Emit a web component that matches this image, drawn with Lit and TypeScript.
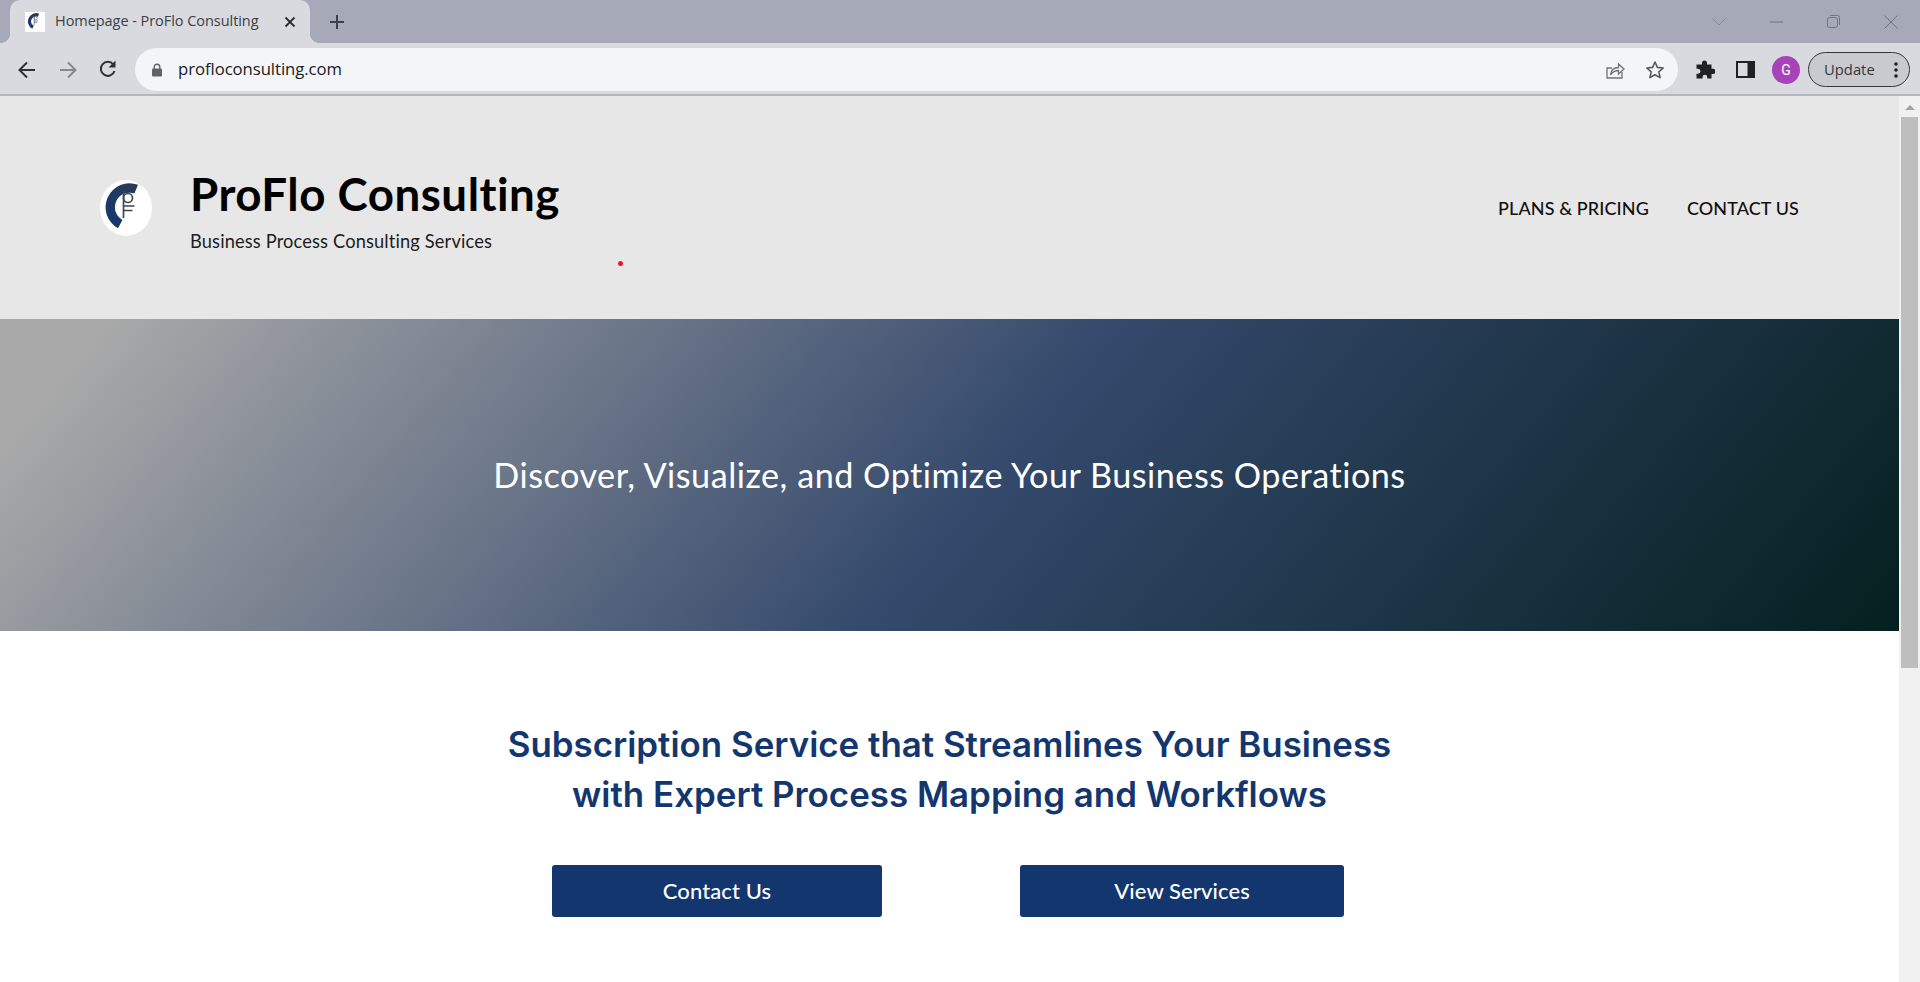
import { LitElement, html, css } from "lit";
import { customElement } from "lit/decorators.js";

const logo = (s: number) => html`<svg width="${s}" height="${s * 56 / 52}" viewBox="0 0 52 56" class="logomark">
  <defs><linearGradient id="lg" x1="0" y1="1" x2="1" y2="0"><stop offset="0" stop-color="#14366f"/><stop offset="1" stop-color="#2c3c58"/></linearGradient></defs>
  <path d="M38 4.800A24 24 0 0 0 18 48.300L22.400 39.900A14.500 14.500 0 0 1 34.400 13.600Z" fill="url(#lg)"/>
  <g fill="none" stroke="#3d4654" stroke-width="1.700"><circle cx="28" cy="18" r="4.500"/><path d="M23.500 11v27"/><path d="M23.500 26h11M23.500 30.500h9"/></g>
</svg>`;

@customElement("app-root")
export class AppRoot extends LitElement {
  static styles = css`
    :host { display: flex; flex-direction: column; width: 1920px; height: 982px; overflow: hidden; font-family: "Lato", "Open Sans", sans-serif; background: #fff; }
    svg { display: block; flex: none; }

    .tabstrip { height: 43px; flex: none; background: #a6a9b7; display: flex; align-items: stretch; padding-left: 10px; }
    .tab { position: relative; width: 300px; background: #d9dae0; border-radius: 10px 10px 0 0; display: flex; align-items: center; padding-left: 15px; box-sizing: border-box; }
    .tab::before, .tab::after { content: ""; position: absolute; bottom: 0; width: 10px; height: 10px; }
    .tab::before { left: -10px; background: radial-gradient(circle at 0 0, transparent 10px, #d9dae0 10.500px); }
    .tab::after { right: -10px; background: radial-gradient(circle at 100% 0, transparent 10px, #d9dae0 10.500px); }
    .fav { width: 20px; height: 20px; background: #fff; display: flex; align-items: center; justify-content: center; overflow: hidden; }
    .tabtitle { margin-left: 10px; width: 228px; font: 14.500px/1 "Open Sans", sans-serif; color: #3c4043; white-space: nowrap; letter-spacing: -0.050px; }
    .plus { margin-left: 19px; align-self: center; }
    .winctl { margin-left: auto; display: flex; align-items: center; padding-right: 22px; gap: 44px; }

    .toolbar { height: 49px; padding-top: 2px; flex: none; background: #d9dae0; border-bottom: 2px solid #b4b6bc; display: flex; align-items: center; padding-left: 16px; }
    .nav { display: flex; gap: 19px; }
    .omni { margin-left: 17px; width: 1543px; height: 43px; border-radius: 22px; background: #f4f5f8; display: flex; align-items: center; padding: 0 13px 0 16px; box-sizing: border-box; }
    .url { margin-left: 15px; font: 16.700px/1 "Open Sans", sans-serif; color: #202124; letter-spacing: -0.050px; }
    .omni-right { margin-left: auto; display: flex; align-items: center; gap: 20px; }
    .tools { display: flex; align-items: center; margin-left: 17px; gap: 21px; }
    .avatar { width: 28px; height: 28px; border-radius: 50%; background: #a742bb; color: #fff; font: 14px/28px "Roboto", sans-serif; text-align: center; margin-left: -4px; }
    .update { margin-left: -13px; width: 102px; height: 35px; box-sizing: border-box; border: 1.500px solid #33363b; border-radius: 18px; background: #c9cad0; display: flex; align-items: center; justify-content: space-between; padding: 0 11px 0 15px; font: 14.800px/1 "Open Sans", sans-serif; color: #33363b; }

    .viewport { flex: 1; display: flex; min-height: 0; }
    .page { flex: 1; min-width: 0; background: #fff; overflow: hidden; }
    .scrollbar { width: 21px; flex: none; background: #f1f1f1; display: flex; flex-direction: column; align-items: center; }
    .sb-up { width: 0; height: 0; border-left: 5px solid transparent; border-right: 5px solid transparent; border-bottom: 5px solid #a3a3a3; margin-top: 9px; }
    .sb-thumb { width: 17px; height: 551px; background: #bebebe; margin-top: 7px; }

    .head { position: relative; height: 223px; background: #e7e7e7; display: flex; align-items: center; padding: 0 100px; box-sizing: border-box; }
    .circle { width: 52px; height: 56px; border-radius: 50%; background: #fff; flex: none; }
    .brand { margin-left: 38px; margin-top: 5px; }
    .brand h1 { margin: 0; font: 700 45.700px/1.200 "Lato", sans-serif; color: #000; letter-spacing: 0.500px; white-space: nowrap; }
    .brand p { margin: 10px 0 0; font: 400 18.250px/1.200 "Lato", sans-serif; color: #1d1d1d; letter-spacing: 0.150px; white-space: nowrap; }
    .menu { margin-left: auto; display: flex; gap: 38px; font: 500 18px/1 "Lato", sans-serif; color: #111; letter-spacing: 0.100px; white-space: nowrap; }
    .dot { position: absolute; left: 618px; top: 165px; width: 5px; height: 5px; border-radius: 50%; background: #e8162a; }

    .hero { height: 312px; background: linear-gradient(130deg, #a9a9a9 5%, #34496c 52%, #04201f 100%); display: flex; align-items: center; justify-content: center; }
    .hero h2 { margin: 0; font: 400 34.200px/1.200 "Lato", sans-serif; color: #fff; letter-spacing: 0.500px; white-space: nowrap; }

    .cta { display: flex; flex-direction: column; align-items: center; padding-top: 88px; }
    .cta h3 { margin: 0; font: 600 34.900px/50px "Inter", sans-serif; color: #14366f; text-align: center; white-space: nowrap; }
    .btns { display: flex; margin-top: 46px; gap: 138px; margin-left: -3px; }
    .btn { height: 52px; border-radius: 3px; background: #14366f; color: #fff; display: flex; align-items: center; justify-content: center; font: 500 22px/1 "Lato", sans-serif; letter-spacing: 0.100px; }
    .b1 { width: 330px; }
    .b2 { width: 324px; }
  `;

  render() {
    return html`
      <div class="tabstrip">
        <div class="tab">
          <div class="fav">${logo(18)}</div>
          <div class="tabtitle">Homepage - ProFlo Consulting</div>
          <svg width="14" height="14" viewBox="0 0 14 14"><path d="M2.500 2.500l9 9M11.500 2.500l-9 9" stroke="#2b2d31" stroke-width="1.800"/></svg>
        </div>
        <svg class="plus" width="16" height="16" viewBox="0 0 16 16"><path d="M8 1v14M1 8h14" stroke="#3c4043" stroke-width="2"/></svg>
        <div class="winctl">
          <svg width="14" height="8" viewBox="0 0 14 8"><path d="M.500.500L7 7l6.500-6.500" fill="none" stroke="#868892"/></svg>
          <svg width="13" height="2" viewBox="0 0 13 2"><path d="M0 1h13" stroke="#72747e"/></svg>
          <svg width="13" height="13" viewBox="0 0 13 13"><rect x=".500" y="2.500" width="10" height="10" rx="2" fill="none" stroke="#72747e"/><path d="M3 .500h7.500a2 2 0 0 1 2 2V10" fill="none" stroke="#72747e"/></svg>
          <svg width="14" height="14" viewBox="0 0 14 14"><path d="M.500.500l13 13M13.500.500l-13 13" stroke="#72747e"/></svg>
        </div>
      </div>
      <div class="toolbar">
        <div class="nav">
          <svg width="22" height="22" viewBox="0 0 22 22"><path d="M19 11H4M11 3.500L3.500 11l7.500 7.500" fill="none" stroke="#2e3034" stroke-width="2"/></svg>
          <svg width="22" height="22" viewBox="0 0 22 22"><path d="M3 11h15M11 3.500l7.500 7.500-7.500 7.500" fill="none" stroke="#85878c" stroke-width="2"/></svg>
          <svg width="20" height="20" viewBox="0 0 20 20"><path d="M16.500 12a7 7 0 1 1-1.200-6.500" fill="none" stroke="#2e3034" stroke-width="2"/><path d="M17.500 1.500v7h-7z" fill="#2e3034"/></svg>
        </div>
        <div class="omni">
          <svg width="12" height="14" viewBox="0 0 12 14"><path d="M3.200 6V4a2.800 2.800 0 0 1 5.600 0v2" fill="none" stroke="#5f6368" stroke-width="1.400"/><rect x="1" y="5.500" width="10" height="8" rx="1.200" fill="#5f6368"/></svg>
          <span class="url">profloconsulting.com</span>
          <div class="omni-right">
            <svg width="20" height="20" viewBox="0 0 20 20"><path d="M17 12v6H2V8h5" fill="none" stroke="#6f7277" stroke-width="1.300"/><path d="M5.500 15c.5-5 4-7.500 8-7.500V4l5.500 5-5.500 5v-3.500c-3.500 0-6 1.500-8 4.500z" fill="none" stroke="#6f7277" stroke-width="1.300"/></svg>
            <svg width="20" height="20" viewBox="0 0 20 20"><path d="M10 2l2.400 5.400 5.800.6-4.400 3.900 1.300 5.700L10 14.700l-5.100 2.900 1.300-5.700L1.800 8l5.800-.6z" fill="none" stroke="#55585d" stroke-width="1.600" stroke-linejoin="round"/></svg>
          </div>
        </div>
        <div class="tools">
          <svg width="20" height="20" viewBox="0 0 20 20"><path d="M7 3.500a2.500 2.500 0 0 1 5 0V5h4.500v4.200H18a2.600 2.600 0 0 1 0 5.200h-1.500V19h-4.300v-1.500a2.300 2.300 0 0 0-4.600 0V19H1.500v-4.800H3a2.500 2.500 0 0 0 0-5H1.500V5H7z" fill="#202124" transform="translate(0 -.5)"/></svg>
          <svg width="19" height="19" viewBox="0 0 19 19"><path d="M1 2h17v15H1z" fill="#d9dae0" stroke="#202124" stroke-width="2"/><rect x="11.500" y="2" width="6.500" height="15" fill="#202124"/></svg>
          <div class="avatar">G</div>
          <div class="update">
            <span>Update</span>
            <svg width="4" height="16" viewBox="0 0 4 16"><circle cx="2" cy="2" r="1.800" fill="#202124"/><circle cx="2" cy="8" r="1.800" fill="#202124"/><circle cx="2" cy="14" r="1.800" fill="#202124"/></svg>
          </div>
        </div>
      </div>
      <div class="viewport">
        <div class="page">
          <header class="head">
            <div class="circle">${logo(52)}</div>
            <div class="brand">
              <h1>ProFlo Consulting</h1>
              <p>Business Process Consulting Services</p>
            </div>
            <nav class="menu"><span>PLANS &amp; PRICING</span><span>CONTACT US</span></nav>
            <div class="dot"></div>
          </header>
          <section class="hero"><h2>Discover, Visualize, and Optimize Your Business Operations</h2></section>
          <section class="cta">
            <h3>Subscription Service that Streamlines Your Business<br />with Expert Process Mapping and Workflows</h3>
            <div class="btns"><div class="btn b1">Contact Us</div><div class="btn b2">View Services</div></div>
          </section>
        </div>
        <div class="scrollbar"><div class="sb-up"></div><div class="sb-thumb"></div></div>
      </div>
    `;
  }
}
